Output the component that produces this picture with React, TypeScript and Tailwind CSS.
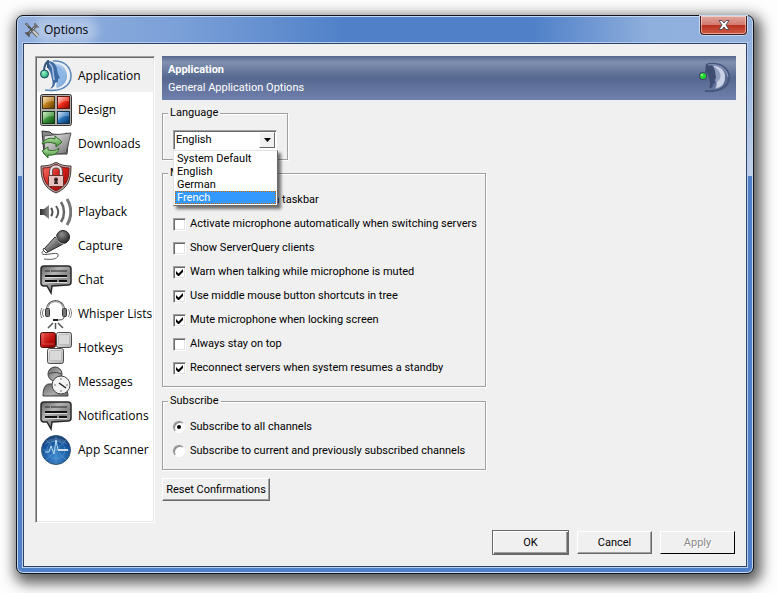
import { useState, type ReactNode } from "react";

const LANGUAGES = ["System Default", "English", "German", "French"];

const MISC_OPTIONS = [
  { id: "popup", label: "Display pop-ups in taskbar", checked: false },
  { id: "mic", label: "Activate microphone automatically when switching servers", checked: false },
  { id: "query", label: "Show ServerQuery clients", checked: false },
  { id: "warn", label: "Warn when talking while microphone is muted", checked: true },
  { id: "middle", label: "Use middle mouse button shortcuts in tree", checked: true },
  { id: "mute", label: "Mute microphone when locking screen", checked: true },
  { id: "top", label: "Always stay on top", checked: false },
  { id: "standby", label: "Reconnect servers when system resumes a standby", checked: true },
];

const SUBSCRIBE_OPTIONS = [
  { id: "all", label: "Subscribe to all channels" },
  { id: "previous", label: "Subscribe to current and previously subscribed channels" },
];

function Icon({ children }: { children: ReactNode }) {
  return (
    <svg viewBox="0 0 32 32" className="w-8 h-8 shrink-0" fill="none" aria-hidden="true">
      {children}
    </svg>
  );
}

function ApplicationIcon() {
  return (
    <Icon>
      <defs>
        <linearGradient id="app-face" x1="0" y1="0" x2="1" y2="1">
          <stop offset="0" stopColor="#cfe2f6" />
          <stop offset="1" stopColor="#6f9fd6" />
        </linearGradient>
        <radialGradient id="app-dot" cx=".4" cy=".35" r=".7">
          <stop offset="0" stopColor="#9af5cc" />
          <stop offset="1" stopColor="#14a067" />
        </radialGradient>
      </defs>
      <path d="M13 3c8-1 14 5 14 13 0 6-4 10-10 12-2-3 1-5-1-8 2-5-1-10-4-17z" fill="url(#app-face)" />
      <path d="M15 5c6 1 9 5 9 11 0 4-2 7-6 10 0-3 2-4 0-7 1-5-1-9-3-14z" fill="#8db6e6" />
      <path d="M8 1c5 0 8 3 9 8l1 5 2 4-2 1v3l-3 1c0 3-2 5-5 6 3-3 3-6 2-10C11 14 10 10 8 9z" fill="#3f6aa3" />
      <path d="M9 3c3 2 4 6 4 9l1 8" stroke="#a9c6ea" strokeWidth="1.500" />
      <path d="M13 1c11-1 18 6 18 15 0 10-10 16-26 14" stroke="#5b86b8" strokeWidth="1.500" />
      <path d="M16 3c8 1 13 6 13 13 0 7-5 12-13 13" stroke="#e4effa" strokeWidth="1" />
      <path d="M4 11c0-5 2-8 4-10v7" stroke="#34567f" strokeWidth="2" />
      <circle cx="4.500" cy="14" r="4" fill="url(#app-dot)" stroke="#24465f" />
    </Icon>
  );
}

function DesignIcon() {
  return (
    <Icon>
      <defs>
        <linearGradient id="d-o" x1="0" y1="0" x2="1" y2="1"><stop stopColor="#ffe0a0" /><stop offset=".5" stopColor="#bd7d1c" /><stop offset="1" stopColor="#593600" /></linearGradient>
        <linearGradient id="d-r" x1="0" y1="0" x2="1" y2="1"><stop stopColor="#ffd0c8" /><stop offset=".5" stopColor="#ee2c19" /><stop offset="1" stopColor="#7d0500" /></linearGradient>
        <linearGradient id="d-g" x1="0" y1="0" x2="1" y2="1"><stop stopColor="#c9efbb" /><stop offset=".5" stopColor="#3c9239" /><stop offset="1" stopColor="#0c4a10" /></linearGradient>
        <linearGradient id="d-b" x1="0" y1="0" x2="1" y2="1"><stop stopColor="#c5e2fb" /><stop offset=".5" stopColor="#2470b5" /><stop offset="1" stopColor="#06305f" /></linearGradient>
      </defs>
      <rect x=".5" y=".5" width="31" height="31" rx="2" fill="#b0adad" stroke="#3b3636" />
      <rect x="2.500" y="2.500" width="12" height="12" fill="url(#d-o)" stroke="#49351b" />
      <rect x="17.500" y="2.500" width="12" height="12" fill="url(#d-r)" stroke="#5e1713" />
      <rect x="2.500" y="17.500" width="12" height="12" fill="url(#d-g)" stroke="#173b18" />
      <rect x="17.500" y="17.500" width="12" height="12" fill="url(#d-b)" stroke="#152f4d" />
      <path d="M3 12c1-4 6-5 11-5V3H3zM18 12c1-4 6-5 11-5V3H18zM3 27c1-4 6-5 11-5v-4H3zM18 27c1-4 6-5 11-5v-4H18z" fill="#fff" opacity=".25" />
    </Icon>
  );
}

function DownloadsIcon() {
  return (
    <Icon>
      <defs>
        <linearGradient id="dl-f" x1="0" y1="0" x2="1" y2="1"><stop stopColor="#f2f2f2" /><stop offset="1" stopColor="#6c6c6c" /></linearGradient>
        <linearGradient id="dl-g" x1="0" y1="0" x2="0" y2="1"><stop stopColor="#c3edb2" /><stop offset="1" stopColor="#3f8d35" /></linearGradient>
      </defs>
      <path d="M2 3l8 1 2 2 13 1 1-2 3 1-2 20H4z" fill="#8a8a8a" stroke="#303030" />
      <path d="M4 8l27-3-5 20-21 2z" fill="url(#dl-f)" stroke="#555" />
      <path d="M2 16c2-5 8-7 13-5V8l7 6-6 5v-3c-5-2-9-2-14 0z" fill="url(#dl-g)" stroke="#2f6a27" />
      <path d="M19 20c-1 6-6 8-11 7v3l-6-7 6-4v3c4 1 8 1 11-2z" fill="url(#dl-g)" stroke="#2f6a27" />
    </Icon>
  );
}

function SecurityIcon() {
  return (
    <Icon>
      <defs>
        <linearGradient id="sec" x1="0" y1="0" x2="1" y2="1"><stop stopColor="#f77a6d" /><stop offset=".5" stopColor="#d31e17" /><stop offset="1" stopColor="#8d0905" /></linearGradient>
      </defs>
      <path d="M16 0c4 3 9 4 15 4 0 14-3 22-15 27C4 26 1 18 1 4c6 0 11-1 15-4z" fill="#b3a9a9" stroke="#4d3434" />
      <path d="M16 2c4 3 8 4 13 4 0 12-3 18-13 23C6 24 3 18 3 6c5 0 9-1 13-4z" fill="url(#sec)" stroke="#7c1511" />
      <path d="M11 14V9c0-6 10-6 10 0v5" stroke="#6b5050" strokeWidth="4" />
      <path d="M11 14V9c0-6 10-6 10 0v5" stroke="#eadada" strokeWidth="2" />
      <rect x="8.500" y="13.500" width="15" height="11" rx="1" fill="#e6c0bc" stroke="#6d302c" />
      <circle cx="16" cy="17.500" r="2" fill="#332020" />
      <path d="M15 18h2l1 4h-4z" fill="#332020" />
    </Icon>
  );
}

function PlaybackIcon() {
  return (
    <Icon>
      <defs>
        <linearGradient id="pb" x1="0" y1="0" x2="1" y2="0"><stop stopColor="#2c2c2c" /><stop offset="1" stopColor="#8a8a8a" /></linearGradient>
      </defs>
      <path d="M0 13h4l5-4v14l-5-4H0z" fill="url(#pb)" />
      <path d="M11 12c2 2 2 6 0 8" stroke="#4c4c4c" strokeWidth="2" />
      <path d="M16 10c3 4 3 8 0 12" stroke="#5c5c5c" strokeWidth="2" />
      <path d="M21 6c4 6 4 14 0 20" stroke="#686868" strokeWidth="2.500" />
      <path d="M27 3c5 8 5 18 0 26" stroke="#777" strokeWidth="3" />
    </Icon>
  );
}

function CaptureIcon() {
  return (
    <Icon>
      <defs>
        <linearGradient id="cap" x1="0" y1="0" x2="1" y2="1"><stop stopColor="#f0f0f0" /><stop offset=".5" stopColor="#777" /><stop offset="1" stopColor="#222" /></linearGradient>
        <radialGradient id="cap-h" cx=".4" cy=".3" r=".7"><stop stopColor="#909090" /><stop offset="1" stopColor="#252525" /></radialGradient>
      </defs>
      <path d="M4 20c-5 5 0 5 6 4s9-1 8 2-6 4-14 3" stroke="#555" strokeWidth="1" />
      <path d="M15 7l8 7L8 22l-4-3z" fill="url(#cap)" stroke="#2d2d2d" />
      <path d="M4 18l4 4-2 1-3-3z" fill="#fff" stroke="#333" />
      <circle cx="23" cy="7" r="6.500" fill="url(#cap-h)" stroke="#222" />
      <path d="M16 6c1 5 4 8 8 8" stroke="#bbb" />
    </Icon>
  );
}

function ChatIcon({ gradient }: { gradient: string }) {
  return (
    <Icon>
      <defs>
        <linearGradient id={gradient} x1="0" y1="0" x2="1" y2="1"><stop stopColor="#5c5c5c" /><stop offset=".35" stopColor="#b5b5b5" /><stop offset=".6" stopColor="#858585" /><stop offset="1" stopColor="#c8c8c8" /></linearGradient>
      </defs>
      <path d="M4 2h24c2 0 3 1 3 3v13c0 2-1 3-3 3l-16 1-1 7-4-7H4c-2 0-3-1-3-3V5c0-2 1-3 3-3z" fill={`url(#${gradient})`} stroke="#272727" strokeWidth="1.500" />
      <path d="M5 7h5M11 7h16" stroke="#222" strokeWidth="1" />
      <path d="M5 12h22M5 17h12M19 17h8" stroke="#111" strokeWidth="2" />
      <path d="M5 13.500h22M5 18.500h22" stroke="#ddd" strokeWidth="1" />
    </Icon>
  );
}

function WhisperIcon() {
  return (
    <Icon>
      <path d="M7 12C7 0 24 0 24 12" stroke="#555" strokeWidth="2" />
      <path d="M7 12C7 1 24 1 24 12" stroke="#ccc" strokeWidth="1" />
      <rect x="5.500" y="10.500" width="4" height="8" rx="1" fill="#777" stroke="#333" />
      <rect x="22.500" y="10.500" width="4" height="8" rx="1" fill="#777" stroke="#333" />
      <path d="M4 11c-2 2-2 6 0 8M2 10c-2 3-2 7 0 10M28 11c2 2 2 6 0 8M30 10c2 3 2 7 0 10" stroke="#777" strokeWidth="1" />
      <path d="M24 19c0 3-4 3-8 3" stroke="#444" strokeWidth="1" />
      <path d="M13 21h5v2h-5z" fill="#222" />
      <path d="M13 25l-5 5M15.500 25v6M18 25l5 5" stroke="#555" strokeWidth="1.500" />
    </Icon>
  );
}

function HotkeysIcon() {
  return (
    <Icon>
      <defs>
        <linearGradient id="hk-r" x1="0" y1="0" x2="1" y2="1"><stop stopColor="#ef5a50" /><stop offset=".6" stopColor="#bd0d0a" /><stop offset="1" stopColor="#7d0302" /></linearGradient>
        <linearGradient id="hk-g" x1="0" y1="0" x2="1" y2="1"><stop stopColor="#f5f5f5" /><stop offset="1" stopColor="#adadad" /></linearGradient>
      </defs>
      <rect x=".5" y=".5" width="15" height="15" rx="2" fill="url(#hk-r)" stroke="#441010" />
      <path d="M3 2v10h11" stroke="#f08a80" opacity=".5" />
      <rect x="16.500" y=".5" width="15" height="15" rx="2" fill="url(#hk-g)" stroke="#4c4c4c" />
      <rect x="18.500" y="2.500" width="11" height="10" rx="1" fill="#d9d9d9" stroke="#bbb" />
      <rect x="7.500" y="16.500" width="16" height="15" rx="2" fill="url(#hk-g)" stroke="#4c4c4c" />
      <rect x="9.500" y="18.500" width="12" height="10" rx="1" fill="#d9d9d9" stroke="#bbb" />
    </Icon>
  );
}

function MessagesIcon() {
  return (
    <Icon>
      <defs>
        <linearGradient id="msg" x1="0" y1="0" x2="1" y2="1"><stop stopColor="#666" /><stop offset=".6" stopColor="#aaa" /><stop offset="1" stopColor="#666" /></linearGradient>
      </defs>
      <path d="M3 30c0-7 2-12 6-12h8c6 0 11 5 11 12z" fill="url(#msg)" stroke="#3c3c3c" />
      <circle cx="15" cy="8" r="7" fill="url(#msg)" stroke="#3c3c3c" />
      <path d="M9 8c4-2 8-2 12 0" stroke="#444" />
      <circle cx="21" cy="19" r="9" fill="#f3f3f3" stroke="#444" />
      <path d="M21 12v2M21 24v2M14 19h2M26 19h2" stroke="#777" />
      <path d="M19 17l7 5" stroke="#222" strokeWidth="1.500" />
    </Icon>
  );
}

function ScannerIcon() {
  return (
    <Icon>
      <defs>
        <radialGradient id="scan" cx=".5" cy=".75" r=".75"><stop stopColor="#3e8ad0" /><stop offset=".7" stopColor="#15539a" /><stop offset="1" stopColor="#0c3569" /></radialGradient>
      </defs>
      <circle cx="16" cy="16" r="14.500" fill="url(#scan)" stroke="#3a5878" />
      <circle cx="16" cy="16" r="9" stroke="#5e9bd3" opacity=".5" />
      <path d="M6 6l20 20M26 6L6 26M16 2v28M2 16h28" stroke="#78aede" opacity=".4" />
      <path d="M5 18h4l2-6 3 8 2-14 2 10" stroke="#b9dcf7" />
      <path d="M18 16h10" stroke="#fff" strokeWidth="1.500" />
      <path d="M4 11C8 1 24 1 28 11c-7-4-17-4-24 0z" fill="#fff" opacity=".15" />
    </Icon>
  );
}

const PAGES = [
  { name: "Application", icon: <ApplicationIcon /> },
  { name: "Design", icon: <DesignIcon /> },
  { name: "Downloads", icon: <DownloadsIcon /> },
  { name: "Security", icon: <SecurityIcon /> },
  { name: "Playback", icon: <PlaybackIcon /> },
  { name: "Capture", icon: <CaptureIcon /> },
  { name: "Chat", icon: <ChatIcon gradient="chat-bubble" /> },
  { name: "Whisper Lists", icon: <WhisperIcon /> },
  { name: "Hotkeys", icon: <HotkeysIcon /> },
  { name: "Messages", icon: <MessagesIcon /> },
  { name: "Notifications", icon: <ChatIcon gradient="note-bubble" /> },
  { name: "App Scanner", icon: <ScannerIcon /> },
];

function ToolsIcon() {
  return (
    <svg viewBox="0 0 16 16" className="w-4 h-4" fill="none" aria-hidden="true">
      <path d="M13 3L3 13" stroke="#4a4a4a" strokeWidth="3" />
      <path d="M12 4L4 12" stroke="#c4c4c4" strokeWidth="1" />
      <path d="M4 4l5 5" stroke="#4a4a4a" strokeWidth="2" />
      <path d="M9 9l5 5" stroke="#555" strokeWidth="4" />
      <path d="M9 9l5 5" stroke="#c4c4c4" strokeWidth="2" />
      <path d="M1 2l2-1 2 3-1 1z" fill="#888" stroke="#444" strokeWidth=".5" />
      <path d="M11 1v4h4M1 11h4v4" stroke="#555" strokeWidth="1.500" />
    </svg>
  );
}

function HeaderLogo() {
  return (
    <svg viewBox="0 0 32 32" className="w-8 h-8" fill="none" aria-hidden="true">
      <path d="M12 4c8-1 14 4 14 12 0 6-4 10-10 11 1-4 2-5 0-8 2-4-1-9-4-15z" fill="#8f9dbd" />
      <path d="M14 4c8 0 12 5 12 11s-3 10-9 11c1-3 1-4 1-6 6-4 4-12-4-16z" fill="#c9d2e5" />
      <path d="M7 2c6-1 8 3 9 7l1 7-2 2 2 2-3 2c0 3-1 4-4 4 2-3 1-6 0-9-1-5-3-8-4-6z" fill="#3f4d70" />
      <path d="M9 2c13-2 21 5 21 13 0 10-9 15-24 14" stroke="#46557c" strokeWidth="2" />
      <path d="M9 3c12-2 19 4 20 12" stroke="#8e9cbd" strokeWidth="1" />
      <circle cx="4" cy="14" r="4" fill="#3c4a5e" />
      <circle cx="4" cy="14" r="3" fill="#1fd82f" />
      <circle cx="3" cy="13" r="1" fill="#b6ffb6" />
    </svg>
  );
}

function Group({ title, className, children }: { title: string; className: string; children: ReactNode }) {
  return (
    <fieldset className={`border border-[#a0a0a0] shadow-[1px_1px_0_#fff,inset_1px_1px_0_#fff] pl-[10px] ${className}`}>
      <legend className="-ml-[5px] px-[2px] leading-[14px] bg-[#f0f0f0]">{title}</legend>
      {children}
    </fieldset>
  );
}

function CheckRow({ id, label, checked }: { id: string; label: string; checked: boolean }) {
  return (
    <label htmlFor={id} className="flex items-center gap-1 h-6 whitespace-nowrap">
      <span className="grid place-items-center">
        <input
          id={id}
          type="checkbox"
          defaultChecked={checked}
          className="peer [grid-area:1/1] appearance-none w-[13px] h-[13px] bg-white border border-t-[#a0a0a0] border-l-[#a0a0a0] border-b-white border-r-white shadow-[inset_1px_1px_0_#696969,inset_-1px_-1px_0_#e3e3e3]"
        />
        <svg viewBox="0 0 7 7" className="[grid-area:1/1] w-[7px] h-[7px] hidden peer-checked:block pointer-events-none" aria-hidden="true">
          <path d="M0 2v3l2 2h1l4-4V0L2.500 4.500z" fill="#000" />
        </svg>
      </span>
      {label}
    </label>
  );
}

function RadioRow({ id, label, checked }: { id: string; label: string; checked: boolean }) {
  return (
    <label htmlFor={id} className="flex items-center gap-1 h-6 whitespace-nowrap">
      <span className="grid place-items-center">
        <input
          id={id}
          type="radio"
          name="subscribe"
          defaultChecked={checked}
          className="peer [grid-area:1/1] appearance-none w-[12px] h-[12px] mr-px rounded-full bg-white border border-t-[#8a8a8a] border-l-[#8a8a8a] border-b-white border-r-white shadow-[inset_1px_1px_0_#8a8a8a]"
        />
        <span className="[grid-area:1/1] mr-px w-1 h-1 rounded-full bg-black hidden peer-checked:block pointer-events-none" />
      </span>
      {label}
    </label>
  );
}

function LanguageSelect() {
  const [language, setLanguage] = useState("English");
  return (
    <div className="relative w-[104px]">
      <select
        aria-label="Language"
        value={language}
        onChange={(e) => setLanguage(e.target.value)}
        className="block appearance-none w-full h-5 pl-[2px] bg-white border border-t-[#a0a0a0] border-l-[#a0a0a0] border-b-white border-r-white shadow-[inset_1px_1px_0_#696969]"
      >
        {LANGUAGES.map((el) => (
          <option key={el}>{el}</option>
        ))}
      </select>
      <span className="absolute right-[2px] top-[2px] w-4 h-4 flex items-center justify-center bg-[#f0f0f0] border border-t-white border-l-white border-b-[#696969] border-r-[#696969] pointer-events-none">
        <svg viewBox="0 0 7 4" className="w-[7px] h-1" aria-hidden="true">
          <path d="M0 0h7L3.500 4z" fill="#000" />
        </svg>
      </span>
      <ul
        role="listbox"
        aria-label="Languages"
        className="absolute z-10 left-0 top-full w-[105px] p-px bg-white border border-t-[#e3e3e3] border-l-[#e3e3e3] border-b-[#696969] border-r-[#696969] shadow-[3px_3px_3px_rgba(0,0,0,0.55)]"
      >
        {LANGUAGES.map((el) => (
          <li
            key={el}
            role="option"
            aria-selected={el === "French"}
            className="h-[13px] px-[2px] leading-[13px] aria-selected:bg-[#3399ff] aria-selected:text-white aria-selected:outline-1 aria-selected:-outline-offset-1 aria-selected:outline-dotted aria-selected:outline-[#cc6600]"
          >
            {el}
          </li>
        ))}
      </ul>
    </div>
  );
}

export default function App() {
  const [page, setPage] = useState("Application");

  return (
    <div className="min-h-screen flex pt-[15px] pb-[19px] pl-4 pr-[23px] bg-[#fdfdfd] text-[11px] leading-[14px] text-black font-['Roboto',Tahoma,sans-serif]">
      <div className="flex-1 flex flex-col rounded-[7px] border border-[#10141c] bg-[#4f80c8] bg-[linear-gradient(rgba(255,255,255,0)_20%,rgba(255,255,255,0.4)_100%),linear-gradient(90deg,#93b1df_0%,#7ba0d8_22%,#4f80c8_45%,#4f80c8_70%,#8fafdd_86%,#93b1dd_100%)] bg-[length:100%_160px] bg-no-repeat shadow-[inset_0_0_0_1px_#c5d8f2,3px_5px_14px_4px_rgba(0,0,0,0.65)] px-[6px] pb-[6px]">
        {/* title bar */}
        <header className="relative h-[27px] flex items-center pl-px text-[12px] font-['Open_Sans',sans-serif]">
          <ToolsIcon />
          <h1 className="px-1 rounded-full bg-white/30 shadow-[0_0_8px_6px_rgba(255,255,255,0.3)]">Options</h1>
          <button
            type="button"
            aria-label="Close"
            className="absolute right-0 top-0 w-[47px] h-[19px] flex items-center justify-center rounded-b-[4px] border border-t-0 border-[#451a1c] bg-[linear-gradient(#e3a79e_0%,#d27a6f_48%,#b6301f_50%,#cf5a40_100%)] shadow-[inset_0_0_0_1px_rgba(255,255,255,0.45),0_0_0_1px_#c5d8f2]"
          >
            <svg viewBox="0 0 12 10" className="w-3 h-[10px]" aria-hidden="true">
              <path d="M1 .5h3l2 2.500 2-2.500h3L8 5l3 4.500H8L6 7 4 9.500H1L4 5z" fill="#fff" stroke="#56505c" />
            </svg>
          </button>
        </header>

        <main className="flex-1 flex flex-col bg-[#f0f0f0] border border-[#2d4468] shadow-[0_0_0_1px_#b7cdee] pt-3 pl-[11px] pr-[10px] pb-[11px]">
          <div className="flex-1 flex gap-[7px]">
            <nav className="w-[120px] shrink-0 bg-white border border-t-[#a0a0a0] border-l-[#a0a0a0] border-b-white border-r-white shadow-[inset_1px_1px_0_#696969,inset_-1px_-1px_0_#e9e9e9] p-px">
              <ul>
                {PAGES.map((el) => (
                  <li key={el.name}>
                    <button
                      type="button"
                      aria-current={page === el.name ? "page" : undefined}
                      onClick={() => setPage(el.name)}
                      className="flex items-center gap-[6px] w-full h-[34px] pt-px pl-[3px] font-['Open_Sans',sans-serif] text-[12px] whitespace-nowrap aria-[current=page]:bg-[#f0f0f0]"
                    >
                      {el.icon}
                      {el.name}
                    </button>
                  </li>
                ))}
              </ul>
            </nav>

            <section className="flex-1 flex flex-col items-start">
              <div className="w-full h-11 flex items-center justify-between pl-[6px] pr-[5px] text-white bg-[linear-gradient(#56668c_0%,#8090b0_14%,#56688f_50%,#7080ae_100%)]">
                <div className="leading-[18px] pt-px">
                  <h2 className="font-bold">Application</h2>
                  <p>General Application Options</p>
                </div>
                <HeaderLogo />
              </div>

              <Group title="Language" className="mt-[6px] h-[54px] pt-[10px] pr-[10px]">
                <LanguageSelect />
              </Group>

              <Group title="Misc" className="mt-[6px] w-[324px] pt-2 pb-[6px] pr-1">
                {MISC_OPTIONS.map((el) => (
                  <CheckRow key={el.id} {...el} />
                ))}
              </Group>

              <Group title="Subscribe" className="mt-[7px] w-[324px] pt-[7px] pb-[6px] pr-1">
                {SUBSCRIBE_OPTIONS.map((el) => (
                  <RadioRow key={el.id} {...el} checked={el.id === "all"} />
                ))}
              </Group>

              <button type="button" className="mt-2 h-[23px] w-[108px] whitespace-nowrap border border-t-white border-l-white border-b-[#696969] border-r-[#696969] shadow-[inset_-1px_-1px_0_#a0a0a0]">
                Reset Confirmations
              </button>
            </section>
          </div>

          <footer className="mt-[7px] flex justify-end items-center gap-2 pr-px">
            <button type="button" className="w-[77px] h-[25px] border border-[#696969] shadow-[inset_1px_1px_0_#fff,inset_-1px_-1px_0_#696969,inset_-2px_-2px_0_#a0a0a0]">
              OK
            </button>
            <button type="button" className="w-[75px] h-[23px] border border-t-white border-l-white border-b-[#696969] border-r-[#696969] shadow-[inset_-1px_-1px_0_#a0a0a0]">
              Cancel
            </button>
            <button type="button" disabled className="w-[75px] h-[23px] border border-t-white border-l-white border-b-black border-r-black text-[#8a8a8a] [text-shadow:1px_1px_0_#fff]">
              Apply
            </button>
          </footer>
        </main>
      </div>
    </div>
  );
}
